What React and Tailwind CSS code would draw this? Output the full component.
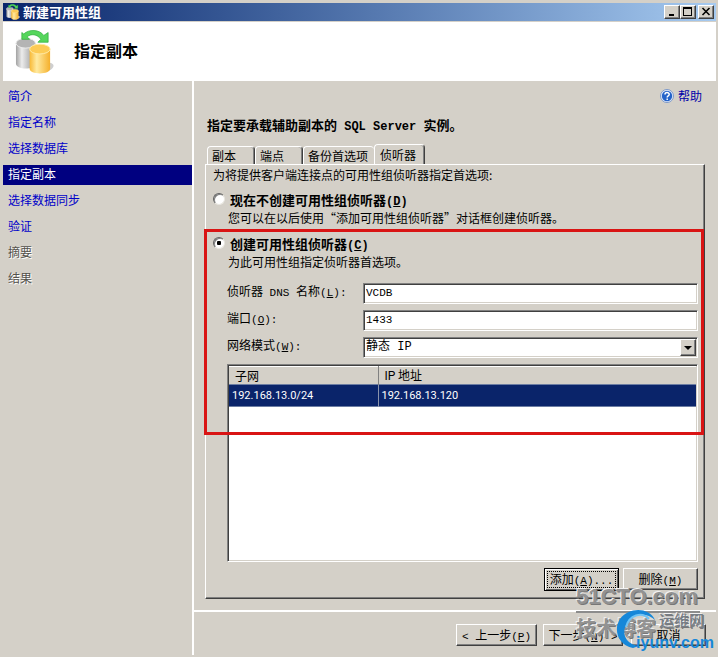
import clsx from 'clsx';

const STEPS = [
  { label: '简介', state: 'link' },
  { label: '指定名称', state: 'link' },
  { label: '选择数据库', state: 'link' },
  { label: '指定副本', state: 'current' },
  { label: '选择数据同步', state: 'link' },
  { label: '验证', state: 'link' },
  { label: '摘要', state: 'disabled' },
  { label: '结果', state: 'disabled' },
];

const TABS = [
  { label: '副本', width: 'w-12' },
  { label: '端点', width: 'w-12' },
  { label: '备份首选项', width: 'w-[71px]' },
  { label: '侦听器', width: 'w-[51px]', active: true },
];

const ROWS = [{ subnet: '192.168.13.0/24', ip: '192.168.13.120' }];

const raised = 'border border-t-white border-l-white border-r-[#404040] border-b-[#404040] shadow-[inset_-1px_-1px_0_#808080]';
const sunken = 'border border-t-[#808080] border-l-[#808080] border-r-white border-b-white shadow-[inset_1px_1px_0_#404040,inset_-1px_-1px_0_#d4d0c8]';

function Mono({ children }) {
  return <span className="font-['Liberation_Mono',monospace] text-[11px] leading-none whitespace-pre">{children}</span>;
}

function Key({ children }) {
  return <Mono>(<u>{children}</u>)</Mono>;
}

function DatabaseIcon({ className }) {
  return (
    <svg viewBox="0 0 40 46" className={className} aria-hidden="true">
      <defs>
        <linearGradient id="grey" x1="0" x2="1">
          <stop offset="0" stopColor="#a2a2a2" />
          <stop offset=".3" stopColor="#ececec" />
          <stop offset="1" stopColor="#8e8e8e" />
        </linearGradient>
        <linearGradient id="gold" x1="0" x2="1">
          <stop offset="0" stopColor="#f8b936" />
          <stop offset=".35" stopColor="#ffeaa0" />
          <stop offset="1" stopColor="#f5b02c" />
        </linearGradient>
      </defs>
      <path d="M24 43l12-9c4 1 5 4 1 7-3 2-8 3-13 2z" fill="#cfcfcf" />
      <path d="M1 14v21c0 3 5 5 10 5s10-2 10-5V14z" fill="url(#grey)" />
      <ellipse cx="11" cy="14" rx="10" ry="5" fill="#b4b4b4" stroke="#ececec" />
      <path d="M15 20v20c0 3.500 5 5 10.500 5s10.500-1.500 10.500-5V20z" fill="url(#gold)" />
      <ellipse cx="25.500" cy="20" rx="10.500" ry="5" fill="#fccb55" stroke="#ffe9a6" />
      <path d="M7 3l2 1.500C14-.5 25-.5 29.500 6L34 3v10H23.500l3-3C23 4.500 16 4 12.500 7.500L15 10H7z" fill="#55d65c" stroke="#2bab3a" strokeWidth=".7" />
    </svg>
  );
}

function HelpIcon() {
  return (
    <svg viewBox="0 0 14 14" className="size-3.5" aria-hidden="true">
      <circle cx="7" cy="7" r="6.500" fill="#e6eefb" stroke="#7c98c8" />
      <circle cx="7" cy="7" r="5.200" fill="#2563c9" />
      <path d="M5 5.500C5 3 9.200 3 9.200 5.400 9.200 7 7.200 6.800 7.200 8.400M7.200 9.600v1.300" fill="none" stroke="#fff" strokeWidth="1.500" />
    </svg>
  );
}

function CaptionButton({ label, className, children }) {
  return (
    <button aria-label={label} className={clsx('h-3.5 w-4 bg-[#d4d0c8] flex items-center justify-center', raised, className)}>
      <svg viewBox="0 0 12 12" className="size-3 shrink-0" fill="none" stroke="#000" shapeRendering="crispEdges">{children}</svg>
    </button>
  );
}

function TitleBar() {
  return (
    <div className="h-[18px] flex items-center bg-linear-to-r from-[#0a246a] to-[#a6caf0] px-0.5">
      <DatabaseIcon className="size-4" />
      <h1 className="ml-0.5 flex-1 text-[13px] leading-4 font-bold text-white">新建可用性组</h1>
      <CaptionButton label="最小化"><path d="M3 8.500h5M3 9.500h5" /></CaptionButton>
      <CaptionButton label="最大化"><path d="M1.500 1.500h8v8h-8zM1 2.500h9" /></CaptionButton>
      <CaptionButton label="关闭" className="ml-0.5"><path d="M2.500 2l7 7M9.500 2l-7 7" strokeWidth="1.600" shapeRendering="auto" /></CaptionButton>
    </div>
  );
}

function Sidebar() {
  return (
    <nav className="w-[189px] shrink-0 flex flex-col gap-1.5 pt-1.5">
      {STEPS.map((s) => {
        if (s.state === 'disabled') {
          return <span key={s.label} className="h-5 px-[5px] leading-[18px] text-[#55534d] [text-shadow:1px_1px_0_#fff]">{s.label}</span>;
        }
        return (
          <a key={s.label} href="#" className={clsx('h-5 px-[5px] leading-[18px]', s.state === 'current' ? 'bg-[#000080] text-white' : 'text-[#0000c8]')}>
            {s.label}
          </a>
        );
      })}
    </nav>
  );
}

function Tabs() {
  return (
    <div role="tablist" className="flex items-end pl-0.5">
      {TABS.map((tab) => (
        <button
          key={tab.label}
          role="tab"
          aria-selected={!!tab.active}
          className={clsx(
            'text-left whitespace-nowrap rounded-t-sm border-t border-l border-white leading-4',
            tab.width,
            tab.active ? 'relative h-[21px] -mb-px bg-[#d4d0c8] pl-[5px]' : 'h-[18px] pl-1',
            tab.label !== '备份首选项' && 'border-r border-r-[#404040] shadow-[inset_-1px_0_0_#808080]',
          )}
        >
          {tab.label}
        </button>
      ))}
    </div>
  );
}

function Choice({ id, mnemonic, label, hint, checked }) {
  return (
    <div className="grid grid-cols-[17px_1fr] auto-rows-[18px] leading-[18px]">
      <input
        type="radio"
        name="listener"
        id={id}
        defaultChecked={checked}
        className="appearance-none size-3 mt-0.5 rounded-full bg-white border border-t-[#606060] border-l-[#606060] border-r-[#e8e6e0] border-b-[#e8e6e0] shadow-[inset_1px_1px_0_#808080] checked:bg-[radial-gradient(circle,#000_2px,#fff_2.500px)]"
      />
      <label htmlFor={id} className="text-[13px] font-bold">
        {label}<span className="font-['Liberation_Mono',monospace] text-xs leading-none">(<u>{mnemonic}</u>)</span>
      </label>
      <p className="col-start-2 -ml-0.5">{hint}</p>
    </div>
  );
}

function Fields() {
  const field = "min-w-0 w-full h-[21px] bg-white px-0.5 pb-0.5 font-['Liberation_Mono','Noto_Sans_CJK_SC',monospace]";
  const label = 'self-start leading-4';
  return (
    <div className="grid grid-cols-[136px_1fr] gap-y-1.5">
      <label htmlFor="dns" className={label}>侦听器<Mono> DNS </Mono>名称<Key>L</Key><Mono>:</Mono></label>
      <input id="dns" defaultValue="VCDB" className={clsx(field, sunken, 'text-[11px]')} />
      <label htmlFor="port" className={label}>端口<Key>O</Key><Mono>:</Mono></label>
      <input id="port" defaultValue="1433" className={clsx(field, sunken, 'text-[11px]')} />
      <label htmlFor="mode" className={label}>网络模式<Key>W</Key><Mono>:</Mono></label>
      <div className="relative">
        <select id="mode" className={clsx(field, sunken, 'block appearance-none text-xs')}>
          <option>静态 IP</option>
        </select>
        <span className={clsx('pointer-events-none absolute right-0.5 inset-y-0.5 w-4 bg-[#d4d0c8] flex items-center justify-center', raised)}>
          <svg viewBox="0 0 8 4" className="w-2 h-1"><path d="M0 0h8L4 4z" /></svg>
        </span>
      </div>
    </div>
  );
}

function SubnetList() {
  return (
    <div className={clsx('flex-1 min-h-[120px] bg-white p-px', sunken)}>
      <table className="w-full border-collapse text-left leading-4">
        <thead>
          <tr className="h-[18px] bg-[#d4d0c8] border-t border-white leading-[14px]">
            <th className="w-[149px] pl-1.5 font-normal border-r border-[#808080]">子网</th>
            <th className="pl-1.5 font-normal"><span className="font-[Roboto]">IP</span> 地址</th>
          </tr>
        </thead>
        <tbody>
          {ROWS.map((r) => (
            <tr key={r.ip} className="h-[22px] bg-[#0a246a] text-white border-y border-[#6c7da3] font-[Roboto] text-[11px]">
              <td className="pl-[3px] border-r border-[#8a93ab]">{r.subnet}</td>
              <td className="pl-[3px]">{r.ip}</td>
            </tr>
          ))}
        </tbody>
      </table>
    </div>
  );
}

function Button({ className, children }) {
  return <button className={clsx('h-[22px] bg-[#d4d0c8] whitespace-nowrap leading-4', raised, className)}>{children}</button>;
}

function ListenerPanel() {
  return (
    <div role="tabpanel" className="relative flex-1 flex flex-col border border-t-white border-l-white border-r-[#404040] border-b-[#404040] shadow-[inset_-1px_-1px_0_#808080] pl-[7px] pr-1.5 pt-0.5 pb-[7px]">
      <p className="leading-4">为将提供客户端连接点的可用性组侦听器指定首选项:</p>
      <div className="mt-2 flex flex-col gap-2">
        <Choice id="later" mnemonic="D" label="现在不创建可用性组侦听器" hint="您可以在以后使用“添加可用性组侦听器”对话框创建侦听器。" />
        <Choice id="now" mnemonic="C" label="创建可用性组侦听器" hint="为此可用性组指定侦听器首选项。" checked />
      </div>
      <div className="mt-3 ml-3.5 flex-1 flex flex-col gap-1.5">
        <Fields />
        <SubnetList />
        <div className="flex justify-end gap-1">
          <button className="h-[23px] w-[75px] border border-black bg-[#d4d0c8] p-0.5 shadow-[inset_1px_1px_0_#fff,inset_-1px_-1px_0_#606060]">
            <span className="block h-full border border-dotted border-black whitespace-nowrap leading-[14px]">添加<Key>A</Key><Mono>...</Mono></span>
          </button>
          <Button className="w-[75px]">删除<Key>M</Key></Button>
        </div>
      </div>
      <div className="pointer-events-none absolute -left-0.5 right-0 top-16 h-[206px] border-3 border-[#d91414]" />
    </div>
  );
}

function Watermark() {
  return (
    <div aria-hidden="true" className="pointer-events-none absolute right-1 bottom-1 w-[138px] h-[70px] font-['Liberation_Sans','Noto_Sans_CJK_SC',sans-serif] font-bold text-[#929292] [text-shadow:-1px_-1px_0_#f2f2f2,1px_1px_0_#777]">
      <div className="w-[124px] border-b-2 border-[#8c8c8c] text-[22px] leading-7">51CTO.com</div>
      <div className="pt-0.5 text-[20px] leading-7">技术博客</div>
      <svg viewBox="0 0 40 40" className="absolute left-10 bottom-1 size-10">
        <path d="M39 11C33-2 13-2 4 10-3 21 2 36 17 39l6-2C9 35 5 24 11 14 17 4 31 3 39 11z" fill="#1687d9" />
        <path d="M33 10C26 2 13 6 10 18" fill="none" stroke="#6fc3f5" strokeWidth="2" />
      </svg>
      <span className="absolute right-2.5 top-7 text-[15px] leading-5 font-medium text-[#777e87]">运维网</span>
      <span className="absolute right-0 bottom-0 text-base leading-5 text-[#1687d9] [text-shadow:none]">iyunv.com</span>
    </div>
  );
}

export default function App() {
  return (
    <div className="relative min-h-screen flex flex-col bg-[#d4d0c8] pt-[3px] pl-[3px] pr-0.5 text-xs text-black font-['Noto_Sans_CJK_SC',sans-serif]">
      <TitleBar />
      <header className="mt-px h-[59px] bg-white flex items-center gap-5 pl-3">
        <DatabaseIcon className="w-[39px] h-[46px]" />
        <h2 className="text-base leading-5 pb-1 font-bold">指定副本</h2>
      </header>
      <div className="flex-1 flex pb-0.5">
        <Sidebar />
        <main className="flex-1 min-w-0 flex flex-col border-l-2 border-white">
          <div className="flex-1 flex flex-col pl-[11px] pr-[11px] pt-[5px] pb-[11px]">
            <a href="#" className="self-end flex items-center gap-1 pr-[3px] leading-5 text-[#0000a8]"><HelpIcon />帮助</a>
            <h3 className="h-5 mt-2.5 mb-2 pl-0.5 text-[13px] leading-[18px] font-bold">
              指定要承载辅助副本的<span className="font-['Liberation_Mono',monospace] text-xs leading-none whitespace-pre"> SQL Server </span>实例。
            </h3>
            <Tabs />
            <ListenerPanel />
          </div>
          <footer className="h-[45px] border-t-2 border-white flex justify-end items-start pt-3 pr-2.5">
            <Button className="w-[81px]"><Mono>&lt; </Mono>上一步<Key>P</Key></Button>
            <Button className="ml-1.5 w-20">下一步<Key>N</Key><Mono> &gt;</Mono></Button>
            <Button className="ml-2 w-[75px]">取消</Button>
          </footer>
        </main>
      </div>
      <Watermark />
    </div>
  );
}
